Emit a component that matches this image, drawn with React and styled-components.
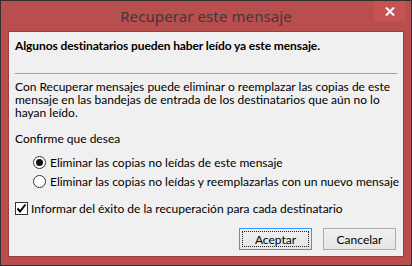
import React, { useState } from 'react'
import styled, { createGlobalStyle } from 'styled-components'

const Global = createGlobalStyle`
  html, body {
    margin: 0;
    padding: 0;
    background: #2b2b2b;
  }
  #root {
    width: 412px;
    height: 266px;
  }
`

// window frame
const Window = styled.div`
  box-sizing: border-box;
  width: 412px;
  height: 266px;
  border: 1px solid #2f2f2f;
  background: #b94e4e;
  display: flex;
  flex-direction: column;
  padding: 0 7px 8px 7px;
  font-family: Lato, 'Liberation Sans', sans-serif;
`

const TitleBar = styled.div`
  height: 30px;
  display: flex;
  align-items: flex-start;
  justify-content: center;
  position: relative;
`

const Title = styled.div`
  font-family: 'Noto Sans', sans-serif;
  font-size: 15px;
  color: #3a3a3a;
  margin-top: 5px;
  letter-spacing: 0.1px;
`

const CloseBtn = styled.button`
  position: absolute;
  top: 0;
  right: -1px;
  width: 31px;
  height: 20px;
  border: none;
  background: #c75252;
  display: flex;
  align-items: center;
  justify-content: center;
  padding: 0;
`

// client area
const Client = styled.div`
  flex: 1;
  background: #f0f0f0;
  border: 1px solid #a13f3f;
  padding: 7px 6px 0 6px;
  display: flex;
  flex-direction: column;
  font-size: 12px;
  line-height: 13px;
  color: #000;
`

const Heading = styled.div`
  font-weight: bold;
  line-height: 14px;
  white-space: nowrap;
  letter-spacing: -0.1px;
`

const Rule = styled.div`
  height: 1px;
  background: #a0a0a0;
  margin: 20px 0 6px 0;
`

const Para = styled.p`
  margin: 0;
  line-height: 13px;
  margin-bottom: ${props => props.gap || 0}px;
`

const OptionList = styled.div`
  display: flex;
  flex-direction: column;
  gap: 6px;
  padding-left: 18px;
  margin-top: 11px;
`

const Row = styled.label`
  display: flex;
  align-items: center;
  gap: 4px;
  height: 13px;
  white-space: nowrap;
`

const RadioDot = styled.span`
  box-sizing: border-box;
  flex: none;
  width: 13px;
  height: 13px;
  border-radius: 50%;
  border: 1px solid #333;
  background: #fff;
  display: flex;
  align-items: center;
  justify-content: center;
  &::after {
    content: '';
    width: 7px;
    height: 7px;
    border-radius: 50%;
    background: ${props => props.checked ? '#111' : 'transparent'};
  }
`

const CheckRow = styled(Row)`
  margin-top: 14px;
  gap: 3px;
`

const Box = styled.span`
  box-sizing: border-box;
  flex: none;
  width: 13px;
  height: 13px;
  border: 1px solid #333;
  background: #fff;
  display: flex;
  align-items: center;
  justify-content: center;
`

const Buttons = styled.div`
  display: flex;
  justify-content: flex-end;
  gap: 11px;
  margin-top: 13px;
  padding-right: 1px;
`

const Button = styled.button`
  box-sizing: border-box;
  width: 73px;
  height: 22px;
  font-family: inherit;
  font-size: 12px;
  color: #000;
  padding: 0;
  border: 1px solid ${props => props.primary ? '#3399ff' : '#acacac'};
  background: linear-gradient(#f0f0f0, #e5e5e5);
  position: relative;
  span {
    display: flex;
    align-items: center;
    justify-content: center;
    position: absolute;
    inset: 2px;
    border: 1px dotted ${props => props.primary ? '#222' : 'transparent'};
  }
`

export default function App() {
  const [choice, setChoice] = useState(0)
  const [notify, setNotify] = useState(true)
  return (
    <>
      <Global />
      <Window>
        <TitleBar>
          <Title>Recuperar este mensaje</Title>
          <CloseBtn>
            <svg width="10" height="9" viewBox="0 0 10 9">
              <path d="M1 0.5 L9 8.5 M9 0.5 L1 8.5" stroke="#fff" strokeWidth="2" />
            </svg>
          </CloseBtn>
        </TitleBar>
        <Client>
          <Heading>Algunos destinatarios pueden haber leído ya este mensaje.</Heading>
          <Rule />
          <Para gap={13}>
            Con Recuperar mensajes puede eliminar o reemplazar las copias de este mensaje en las bandejas de entrada de los destinatarios que aún no lo hayan leído.
          </Para>
          <Para>Confirme que desea</Para>
          <OptionList>
            <Row onClick={() => setChoice(0)}>
              <RadioDot checked={choice === 0} />
              Eliminar las copias no leídas de este mensaje
            </Row>
            <Row onClick={() => setChoice(1)}>
              <RadioDot checked={choice === 1} />
              Eliminar las copias no leídas y reemplazarlas con un nuevo mensaje
            </Row>
          </OptionList>
          <CheckRow onClick={() => setNotify(!notify)}>
            <Box>
              {notify && (
                <svg width="11" height="11" viewBox="0 0 11 11">
                  <path d="M1.5 5.5 L4 8.5 L9.5 1.5" stroke="#000" strokeWidth="2" fill="none" />
                </svg>
              )}
            </Box>
            Informar del éxito de la recuperación para cada destinatario
          </CheckRow>
          <Buttons>
            <Button primary><span>Aceptar</span></Button>
            <Button><span>Cancelar</span></Button>
          </Buttons>
        </Client>
      </Window>
    </>
  )
}
